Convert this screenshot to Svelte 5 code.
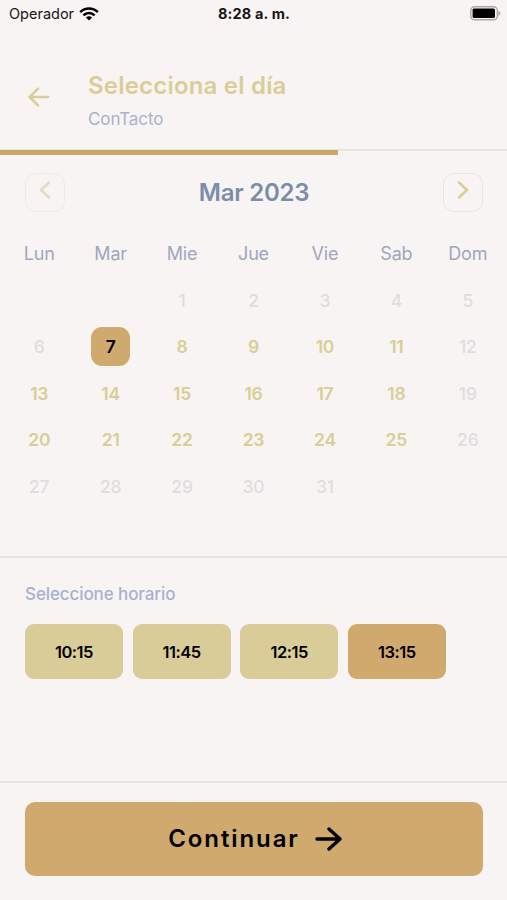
<script>
  const weekdays = ['Lun', 'Mar', 'Mie', 'Jue', 'Vie', 'Sab', 'Dom'];
  const hours = ['10:15', '11:45', '12:15', '13:15'];

  // March 2023 starts on Wednesday
  const offset = 2;
  const today = 7;

  const days = Array.from({ length: 31 }, (_, i) => {
    const number = i + 1;
    const sunday = (i + offset) % 7 === 6;
    return { number, enabled: number >= today && number <= 25 && !sunday };
  });

  let selectedDay = 7;
  let selectedHour = '13:15';
  let progress = 66.7;

  function selectDay(day) {
    if (day.enabled) selectedDay = day.number;
  }
</script>

<div class="screen">
  <div class="status-bar">
    <div class="carrier">
      <span>Operador</span>
      <svg width="20" height="14" viewBox="0 0 20 14" fill="none" stroke="#000" stroke-width="2.5">
        <path d="M1.2 5.2C6.2 0.3 13.8 0.3 18.8 5.2" />
        <path d="M4.4 8.4C7.6 5.3 12.4 5.3 15.6 8.4" />
        <path d="M10 13.4L6.9 10.4C8.7 8.8 11.3 8.8 13.1 10.4Z" fill="#000" stroke="none" />
      </svg>
    </div>
    <span class="clock">8:28 a. m.</span>
    <svg class="battery" width="31" height="15" viewBox="0 0 31 15">
      <rect x="0.8" y="0.8" width="26.6" height="13" rx="3.8" fill="#f8f4f3" stroke="#aaa7a7" stroke-width="1.4" />
      <rect x="2.6" y="2.6" width="22.4" height="9.4" rx="1.6" fill="#000" />
      <path d="M28.4 5C31 5.8 31 9 28.4 9.8Z" fill="#aaa7a7" />
    </svg>
  </div>

  <header class="header">
    <button class="back" aria-label="Volver">
      <svg width="22" height="20" viewBox="0 0 22 20">
        <path d="M20.3 10H1.7M10 1.6L1.6 10L10 18.4" />
      </svg>
    </button>
    <div class="titles">
      <h1>Selecciona el día</h1>
      <p>ConTacto</p>
    </div>
  </header>
  <div class="progress">
    <div class="progress-value" style="width: {progress}%"></div>
  </div>

  <section class="calendar">
    <div class="month-nav">
      <button class="arrow disabled" aria-label="Mes anterior">
        <svg width="12" height="18" viewBox="0 0 12 18"><path d="M10 1.5L2 9L10 16.5" /></svg>
      </button>
      <h2>Mar 2023</h2>
      <button class="arrow" aria-label="Mes siguiente">
        <svg width="12" height="18" viewBox="0 0 12 18"><path d="M2 1.5L10 9L2 16.5" /></svg>
      </button>
    </div>

    <div class="grid">
      {#each weekdays as weekday}
        <div class="weekday">{weekday}</div>
      {/each}
      {#each Array(offset) as _}
        <div></div>
      {/each}
      {#each days as day}
        <button
          class="day"
          class:enabled={day.enabled}
          class:selected={day.number === selectedDay}
          on:click={() => selectDay(day)}
        >{day.number}</button>
      {/each}
    </div>
  </section>

  <section class="schedule">
    <h3>Seleccione horario</h3>
    <div class="hours">
      {#each hours as hour}
        <button
          class="hour"
          class:active={hour === selectedHour}
          on:click={() => (selectedHour = hour)}
        >{hour}</button>
      {/each}
    </div>
  </section>

  <footer class="footer">
    <button class="continue">
      <span>Continuar</span>
      <svg width="27" height="24" viewBox="0 0 27 24">
        <path d="M2 12H25M14 2L25 12L14 22" />
      </svg>
    </button>
  </footer>
</div>

<style>
  :global(body) {
    background: #f8f4f3;
  }

  .screen {
    display: flex;
    flex-direction: column;
    height: 900px;
    overflow: hidden;
    background: #f8f4f3;
    font-family: Inter, "Open Sans", sans-serif;
  }

  h1,
  h2,
  h3,
  p {
    margin: 0;
  }

  button {
    padding: 0;
    border: none;
    background: none;
    font-family: inherit;
    cursor: pointer;
  }

  svg {
    display: block;
  }

  /* Status bar */
  .status-bar {
    display: grid;
    grid-template-columns: 1fr auto 1fr;
    align-items: center;
    height: 27px;
    padding: 0 6px 0 9px;
    color: #161616;
    font-size: 14.5px;
  }

  .carrier {
    display: flex;
    align-items: center;
    gap: 5px;
  }

  .clock {
    margin-right: 2px;
    font-weight: 700;
    letter-spacing: 0.15px;
  }

  .battery {
    justify-self: end;
  }

  /* Header */
  .header {
    display: flex;
    align-items: center;
    height: 122px;
    padding-left: 28px;
  }

  .back {
    width: 22px;
    margin: 18px 38px 0 0;
  }

  .back path,
  .arrow path,
  .continue path {
    fill: none;
    stroke: #dacd95;
    stroke-width: 2.5;
    stroke-linecap: round;
    stroke-linejoin: round;
  }

  .titles {
    padding-top: 24px;
  }

  h1 {
    color: #dacd98;
    font-size: 24px;
    font-weight: 600;
    letter-spacing: 0.2px;
    line-height: 32px;
  }

  .titles p {
    margin-top: 5px;
    color: #a9b2cd;
    font-size: 17px;
    letter-spacing: -0.1px;
    line-height: 24px;
  }

  .progress {
    height: 6px;
    border-top: 2px solid #e8e4e4;
    box-sizing: border-box;
  }

  .progress-value {
    height: 5px;
    margin-top: -1px;
    background: #cda564;
  }

  /* Calendar */
  .calendar {
    height: 403px;
    padding-top: 18px;
    border-bottom: 2px solid #e6e2e2;
    box-sizing: border-box;
  }

  .month-nav {
    display: flex;
    align-items: center;
    justify-content: space-between;
    padding: 0 24px 0 25px;
  }

  h2 {
    color: #7b8daa;
    font-size: 24px;
    font-weight: 600;
    letter-spacing: -0.25px;
    line-height: 36px;
  }

  .arrow {
    display: flex;
    align-items: center;
    justify-content: center;
    width: 40px;
    height: 39px;
    padding-bottom: 5px;
    border: 1.5px solid #e9e5e4;
    border-radius: 11px;
    box-sizing: border-box;
  }

  .arrow.disabled {
    opacity: 0.6;
  }

  .grid {
    display: grid;
    grid-template-columns: repeat(7, 1fr);
    grid-auto-rows: 46.4px;
    align-items: center;
    justify-items: center;
    padding: 19px 3.5px 0;
  }

  .weekday {
    padding-bottom: 2px;
    color: #9fa6c0;
    font-size: 18px;
    letter-spacing: -0.2px;
  }

  .day {
    width: 39px;
    height: 39px;
    border-radius: 11px;
    color: #e0dcdd;
    font-size: 17.5px;
    font-weight: 500;
    letter-spacing: -0.2px;
  }

  .day.enabled {
    color: #dacd95;
    font-weight: 600;
  }

  .day.selected {
    background: #cfa96d;
    color: #000;
  }

  /* Schedule */
  .schedule {
    flex: 1;
    padding: 23px 25px 0;
  }

  h3 {
    color: #a6b1d0;
    font-size: 17px;
    font-weight: 500;
    letter-spacing: -0.1px;
    line-height: 26px;
  }

  .hours {
    display: flex;
    gap: 9.6px;
    margin-top: 17px;
  }

  .hour {
    width: 98px;
    height: 55px;
    border-radius: 9px;
    background: #d9cc98;
    color: #000;
    font-size: 16.5px;
    font-weight: 600;
    letter-spacing: -0.5px;
  }

  .hour.active {
    background: #cfa96d;
  }

  /* Footer */
  .footer {
    height: 119px;
    padding: 19px 24px 0 25px;
    border-top: 2px solid #e8e4e4;
    box-sizing: border-box;
  }

  .continue {
    display: flex;
    align-items: center;
    justify-content: center;
    gap: 15px;
    width: 100%;
    height: 73.5px;
    padding-left: 2px;
    border-radius: 10px;
    background: #cfa96d;
    color: #000;
    font-size: 24px;
    font-weight: 600;
    letter-spacing: 1.9px;
  }

  .continue span {
    padding-bottom: 1px;
  }

  .continue path {
    stroke: #000;
    stroke-width: 3.4;
  }
</style>
